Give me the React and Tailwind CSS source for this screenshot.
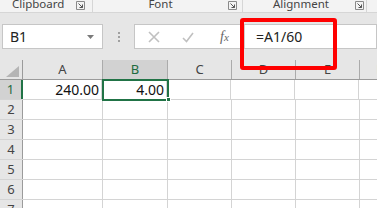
import React from "react";

const cols = [
  { k: "A", w: 80 },
  { k: "B", w: 65 },
  { k: "C", w: 64 },
  { k: "D", w: 64 },
  { k: "E", w: 64 },
  { k: "F", w: 40 },
];

function Launcher() {
  return (
    <svg width="9" height="9" viewBox="0 0 9 9" className="shrink-0">
      <path d="M0.5 8.5V0.5H8.5V8.5Z" fill="none" stroke="#8a8a8a" strokeWidth="1" />
      <path d="M2.5 2.5L6.5 6.5M3.5 6.5H6.5V3.5" fill="none" stroke="#555" strokeWidth="1" />
    </svg>
  );
}

export default function App() {
  const rows = [1, 2, 3, 4, 5, 6, 7];
  return (
    <div
      className="relative w-[377px] h-[208px] overflow-hidden bg-white"
      style={{ fontFamily: '"Noto Sans", "Open Sans", sans-serif' }}
    >
      {/* ribbon group labels */}
      <div className="flex h-[13px] bg-[#f3f3f3] border-b border-[#d6d6d6] text-[11.5px] leading-[11px] text-[#444]">
        <div className="flex w-[93px] items-start border-r border-[#d6d6d6]">
          <span className="pl-[12px] w-[76px] -mt-[2px]">Clipboard</span>
          <span className="mt-[1px]"><Launcher /></span>
        </div>
        <div className="flex w-[150px] items-start border-r border-[#d6d6d6]">
          <span className="w-[135px] text-center -mt-[2px]">Font</span>
          <span className="mt-[1px]"><Launcher /></span>
        </div>
        <div className="flex w-[124px] items-start border-r border-[#d6d6d6]">
          <span className="w-[112px] text-center -mt-[2px] pl-[4px]">Alignment</span>
          <span className="mt-[1px]"><Launcher /></span>
        </div>
      </div>

      {/* formula bar area */}
      <div className="flex h-[47px] bg-[#e6e6e6] pt-[11px] pl-[2px]">
        <div className="flex h-[25px] w-[101px] items-center justify-between border border-[#c6c6c6] bg-white pl-[7px] pr-[8px]">
          <span className="text-[14px] text-[#222]">B1</span>
          <svg width="7" height="4" viewBox="0 0 7 4"><path d="M0 0H7L3.5 4Z" fill="#7a7a7a" /></svg>
        </div>
        <div className="flex w-[31px] h-[25px] flex-col items-center justify-center gap-[2px]">
          <span className="block w-[2px] h-[2px] bg-[#a0a0a0]" />
          <span className="block w-[2px] h-[2px] bg-[#a0a0a0]" />
          <span className="block w-[2px] h-[2px] bg-[#a0a0a0]" />
        </div>
        <div className="flex h-[25px] flex-1 border border-[#c6c6c6] bg-white">
          <div className="flex w-[110px] items-center border-r border-[#d0d0d0]">
            <svg width="12" height="12" viewBox="0 0 12 12" className="ml-[13px]">
              <path d="M1 1L11 11M11 1L1 11" stroke="#c0c0c0" strokeWidth="1.6" />
            </svg>
            <svg width="12" height="12" viewBox="0 0 12 12" className="ml-[22px]">
              <path d="M1 7L4.5 10.5L11 2" fill="none" stroke="#c0c0c0" strokeWidth="1.6" />
            </svg>
            <span
              className="ml-[26px] text-[14px] italic text-[#666]"
              style={{ fontFamily: '"Liberation Serif", serif' }}
            >
              f<span className="text-[11px]">x</span>
            </span>
          </div>
          <div className="flex items-center pl-[11px] text-[14px] text-[#222]">=A1/60</div>
        </div>
      </div>

      {/* column headers */}
      <div className="flex h-[20px] bg-[#e6e6e6] border-b border-[#9b9b9b]">
        <div className="relative w-[23px] shrink-0 border-r border-[#9b9b9b]">
          <svg width="13" height="11" viewBox="0 0 13 11" className="absolute right-[3px] bottom-[2px]">
            <path d="M13 0V11H0Z" fill="#b5b5b5" />
          </svg>
        </div>
        {cols.map((c) => (
          <div
            key={c.k}
            className={
              c.k === "B"
                ? "flex shrink-0 items-center justify-center border-r border-[#ababab] bg-[#d2d2d2] text-[13px] text-[#1e6b3f]"
                : "flex shrink-0 items-center justify-center border-r border-[#ababab] text-[13px] text-[#444]"
            }
            style={{ width: c.w }}
          >
            {c.k}
          </div>
        ))}
      </div>

      {/* rows */}
      {rows.map((r) => (
        <div key={r} className="flex h-[20px] border-b border-[#d4d4d4]">
          <div
            className={
              r === 1
                ? "flex w-[23px] shrink-0 items-center justify-center border-r-2 border-[#217346] bg-[#d2d2d2] text-[13px] text-[#1e6b3f]"
                : "flex w-[23px] shrink-0 items-center justify-center border-r border-[#9b9b9b] bg-[#e6e6e6] text-[13px] text-[#444]"
            }
          >
            {r}
          </div>
          {cols.map((c, i) => (
            <div
              key={c.k}
              className="flex shrink-0 items-center justify-end border-r border-[#d4d4d4] pr-[2px] text-[14px] text-[#111]"
              style={{ width: r === 1 && i === 0 ? c.w - 1 : c.w }}
            >
              {r === 1 && c.k === "A" ? "240.00" : r === 1 && c.k === "B" ? "4.00" : ""}
            </div>
          ))}
        </div>
      ))}

      {/* selection B1 */}
      <div className="absolute left-[102px] top-[79px] w-[67px] h-[22px] border-2 border-[#217346]" />
      <div className="absolute left-[166px] top-[97px] w-[5px] h-[5px] bg-[#217346] border border-white" />
      <div className="absolute left-[103px] top-[79px] w-[65px] h-[1px] bg-[#217346]" />

      {/* red highlight */}
      <div className="absolute left-[240px] top-[18px] w-[97px] h-[52px] border-4 border-[#ff0000] rounded-[3px]" />
    </div>
  );
}
